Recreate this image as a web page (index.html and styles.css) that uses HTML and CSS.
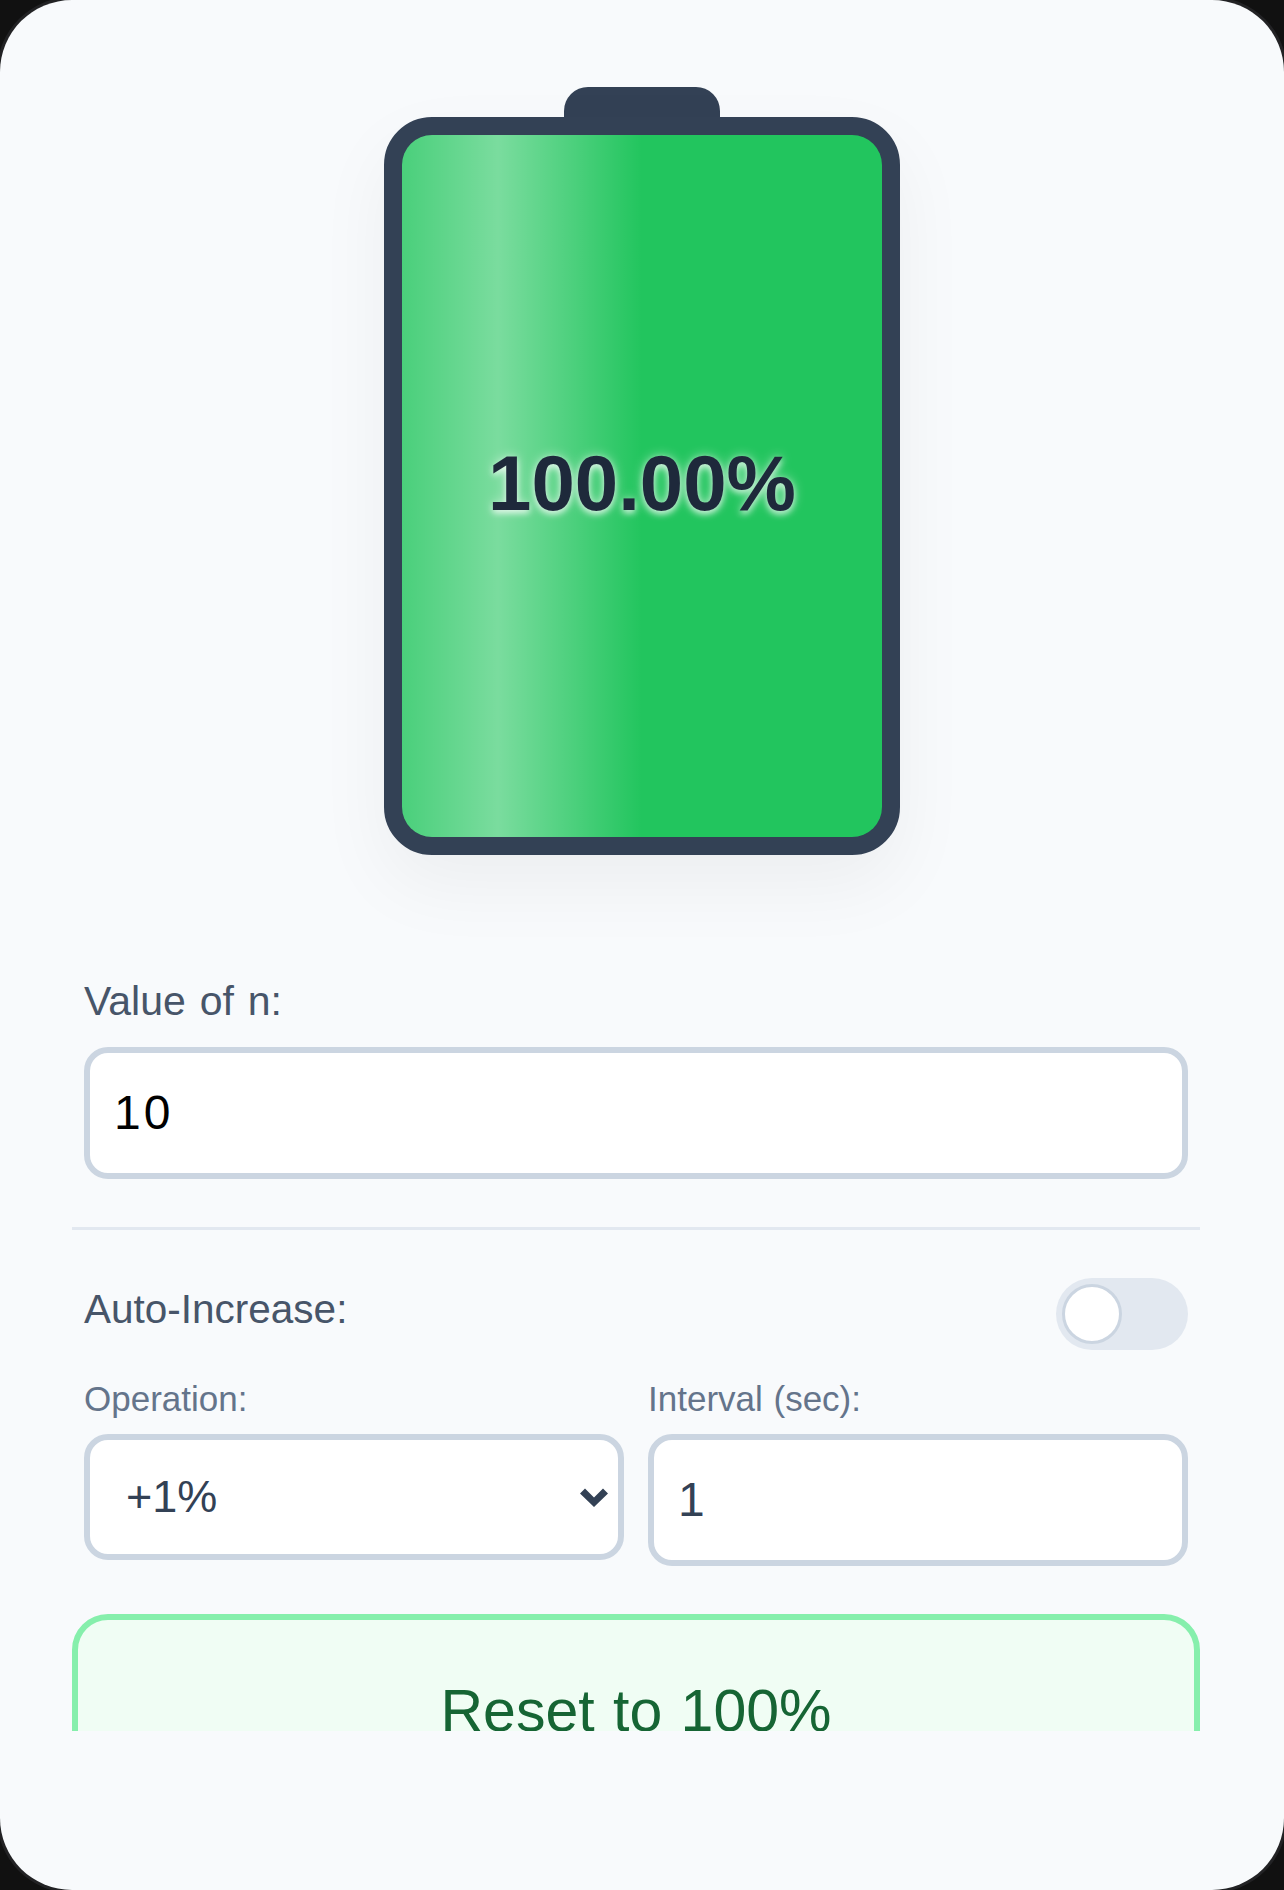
FILE: index.html
```html
<!DOCTYPE html>
<html lang="en">
<head>
<meta charset="utf-8">
<title>Battery</title>
<link rel="stylesheet" href="styles.css">
</head>
<body>
<main class="device">
  <div class="screen">
    <section class="battery">
      <div class="battery-tip"></div>
      <div class="battery-body">
        <div class="battery-fill">
          <span class="battery-text">100.00%</span>
        </div>
      </div>
    </section>
    <form class="form">
      <div class="field">
        <label class="label" for="n">Value of n:</label>
        <input class="input input-n" id="n" type="text" value="10">
      </div>
      <hr class="divider">
      <div class="toggle-row">
        <span class="label toggle-label">Auto-Increase:</span>
        <span class="toggle"><span class="knob"></span></span>
      </div>
      <div class="auto-grid">
        <div>
          <label class="sublabel" for="op">Operation:</label>
          <div class="select-wrap">
            <select class="select" id="op"><option>+1%</option></select>
            <svg class="chevron" width="28" height="20" viewBox="0 0 28 20"><path d="M0 6.5 L5 1.5 L14 10.5 L23 1.5 L28 6.5 L14 20 Z" fill="#334155"/></svg>
          </div>
        </div>
        <div>
          <label class="sublabel" for="iv">Interval (sec):</label>
          <input class="input input-iv" id="iv" type="text" value="1">
        </div>
      </div>
      <button class="reset" type="button">Reset to 100%</button>
    </form>
  </div>
</main>
</body>
</html>
```
FILE: styles.css
```css
* { box-sizing: border-box; }
html, body { margin: 0; padding: 0; background: #111111; }
body { width: 1284px; height: 1890px; overflow: hidden; font-family: "Liberation Sans", Arial, sans-serif; }
.device {
  width: 1284px; height: 1890px; background: #f8fafc; border-radius: 72px;
  box-shadow: 0 0 0 3px #222224; overflow: hidden;
}
.screen { height: 1731px; overflow: hidden; padding-top: 87px; }
.battery { display: flex; flex-direction: column; align-items: center; }
.battery-tip { width: 156px; height: 30px; background: #334155; border-radius: 24px 24px 0 0; }
.battery-body {
  width: 516px; height: 738px; border: 18px solid #334155; border-radius: 48px;
  background: #334155; box-shadow: 0 30px 75px rgba(0,0,0,0.05);
}
.battery-fill {
  height: 100%; border-radius: 30px; display: flex; align-items: center; justify-content: center;
  background: linear-gradient(90deg, rgba(255,255,255,0.18) 0%, rgba(255,255,255,0.4) 20%, rgba(255,255,255,0) 50%), #22c55e;
}
.battery-text {
  font-size: 78px; font-weight: 700; color: #1e293b;
  text-shadow: 0 3px 6px rgba(255,255,255,0.7), 0 0 12px rgba(255,255,255,0.5);
  transform: translateY(-3px);
}
.form { margin: 121px 84px 0 72px; }
.field { padding: 0 12px; }
.label { display: block; font-size: 41px; line-height: 50px; word-spacing: 2.5px; color: #475569; }
.input {
  display: block; width: 100%; background: #fff; border: 6px solid #cbd5e1; border-radius: 24px;
  font-family: inherit; font-size: 48px; letter-spacing: 3px; padding: 0 24px 2px; outline: none;
}
.input-n { height: 132px; margin-top: 21px; color: #000; }
.divider { height: 3px; margin: 48px 0 0; border: 0; background: #e2e8f0; }
.toggle-row { display: flex; justify-content: space-between; align-items: flex-start; margin-top: 48px; padding: 0 12px; height: 72px; }
.toggle-label { font-size: 40.5px; line-height: 62px; }
.toggle { width: 132px; height: 72px; border-radius: 36px; background: #e2e8f0; padding: 6px; }
.knob { display: block; width: 60px; height: 60px; border-radius: 50%; background: #fff; border: 3px solid #cbd5e1; }
.auto-grid { display: grid; grid-template-columns: 1fr 1fr; gap: 24px; align-items: start; margin-top: 24px; padding: 0 12px; }
.sublabel { display: block; font-size: 35px; line-height: 50px; margin-bottom: 10px; word-spacing: 1px; color: #64748b; }
.select-wrap { position: relative; }
.select {
  display: block; width: 100%; height: 126px; appearance: none; background: #fff;
  border: 6px solid #cbd5e1; border-radius: 24px; font-family: inherit; font-size: 45px;
  color: #334155; padding: 0 36px 2px; outline: none;
}
.chevron { position: absolute; right: 16px; top: 53px; }
.input-iv { height: 132px; color: #334155; }
.reset {
  display: block; width: 100%; height: 194px; margin-top: 48px; background: #f0fdf4;
  border: 6px solid #86efac; border-radius: 36px; font-family: inherit; font-size: 59px; word-spacing: 2px; color: #166534;
}
```
